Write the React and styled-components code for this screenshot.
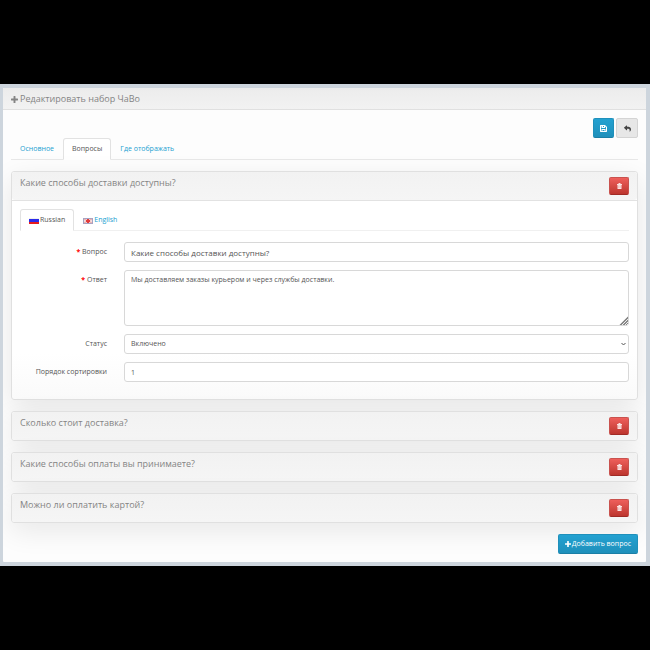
import React, { useState } from 'react';
import styled, { createGlobalStyle } from 'styled-components';
import { FaReply } from 'react-icons/fa';

const GlobalStyles = createGlobalStyle`
  * {
    box-sizing: border-box;
  }
  body {
    margin: 0;
    background: #000;
    color: #555;
    font-family: 'Open Sans', 'Noto Sans', sans-serif;
    font-size: 7px;
    line-height: 10px;
  }
  button,
  input,
  select,
  textarea {
    font: inherit;
    color: inherit;
  }
`;

const PageStyles = styled.main`
  display: flex;
  flex-direction: column;
  justify-content: center;
  min-height: 100vh;
`;

const BackdropStyles = styled.div`
  padding: 4px 4px 4px 3px;
  background: #cdd5dd;
`;

const CardStyles = styled.section`
  background: #fdfdfd;
  border-radius: 1px;
  overflow: hidden;
`;

const CardHeading = styled.header`
  display: flex;
  align-items: center;
  gap: 2px;
  height: 22px;
  padding: 1px 8px 0;
  color: #848484;
  background: linear-gradient(#ececec, #f2f2f2);
  border-bottom: 1px solid #e0e0e0;
  h1 {
    margin: 0;
    font-size: 9px;
    font-weight: 400;
    line-height: 12px;
  }
`;

const CardBody = styled.div`
  padding: 8px;
`;

const Toolbar = styled.div`
  display: flex;
  justify-content: flex-end;
  gap: 2px;
`;

const Button = styled.button`
  display: inline-flex;
  align-items: center;
  justify-content: center;
  gap: 1px;
  height: 20px;
  min-width: 21px;
  padding: 0 6px;
  color: #fff;
  background: linear-gradient(#23a1d1, #1f90bb);
  border: 1px solid #1f90bb;
  border-bottom-color: #1b7fa6;
  border-radius: 2px;
  cursor: pointer;
`;

const DefaultButton = styled(Button)`
  min-width: 22px;
  color: #444;
  background: #e7e7e7;
  border-color: #d4d4d4;
`;

const DangerButton = styled(Button)`
  height: 18px;
  min-width: 20px;
  background: linear-gradient(#ee5f5b, #bd362f);
  border-color: #c9524e;
  border-bottom-color: #a02b26;
`;

const TabList = styled.div`
  display: flex;
  border-bottom: 1px solid ${({ $soft }) => ($soft ? '#f0f0f0' : '#e8e8e8')};
`;

const Tab = styled.button`
  display: flex;
  align-items: center;
  gap: 1px;
  height: 22px;
  margin-bottom: -1px;
  padding: 0 8px;
  color: ${({ $active }) => ($active ? '#555' : '#23a1d1')};
  background: ${({ $active }) => ($active ? '#fff' : 'transparent')};
  border: 1px solid ${({ $active }) => ($active ? '#e2e2e2' : 'transparent')};
  border-bottom-color: ${({ $active }) => ($active ? '#fff' : 'transparent')};
  border-radius: 3px 3px 0 0;
  cursor: pointer;
`;

const PanelList = styled.div`
  display: flex;
  flex-direction: column;
  gap: 11px;
  margin: 11px 0;
`;

const PanelStyles = styled.article`
  background: linear-gradient(#fff 80%, #fafafa);
  border: 1px solid #e0e0e0;
  border-radius: 3px;
  box-shadow: 0 8px 28px rgba(0, 0, 0, 0.09);
`;

const PanelHeading = styled.header`
  display: flex;
  align-items: flex-start;
  justify-content: space-between;
  padding: 5px 8px;
  background: linear-gradient(#f2f2f2, #f5f5f5);
  border-radius: 3px;
  h2 {
    margin: 0;
    color: #848484;
    font-size: 9px;
    font-weight: 400;
    line-height: 12px;
  }
`;

const PanelBody = styled.div`
  padding: 8px 8px 17px;
  border-top: 1px solid #e2e2e2;
`;

const FormStyles = styled.div`
  display: flex;
  flex-direction: column;
  gap: 8px;
  margin-top: 11px;
`;

const FieldStyles = styled.div`
  display: grid;
  grid-template-columns: 104px 1fr;
  label {
    padding: 5px 17px 0 0;
    text-align: right;
  }
  label span {
    color: #f00;
    font-weight: 700;
  }
`;

const TextInput = styled.input`
  width: 100%;
  height: 20px;
  padding: 0 6px;
  font-size: ${({ $large }) => ($large ? '8px' : '7px')};
  background: #fff;
  border: 1px solid #d8d8d8;
  border-radius: 3px;
`;

const TextArea = styled.textarea`
  display: block;
  width: 100%;
  height: 56px;
  padding: 4px 6px;
  background: #fff;
  border: 1px solid #d8d8d8;
  border-radius: 3px;
  resize: vertical;
  &::-webkit-resizer {
    background:
      linear-gradient(135deg, #fff 50%, transparent 50%) right bottom / 9px 9px no-repeat,
      repeating-linear-gradient(135deg, #eee 0 1px, #888 1px 2px) right bottom / 9px 9px no-repeat;
  }
`;

const SelectStyles = styled.div`
  display: grid;
  align-items: center;
  select,
  svg {
    grid-area: 1 / 1;
  }
  select {
    width: 100%;
    height: 20px;
    padding: 0 6px;
    appearance: none;
    background: #fff;
    border: 1px solid #d8d8d8;
    border-radius: 3px;
  }
  svg {
    justify-self: end;
    margin-right: 3px;
    pointer-events: none;
  }
`;

const Footer = styled.footer`
  display: flex;
  justify-content: flex-end;
`;

const PlusIcon = ({ size }) => (
  <svg width={size} height={size} viewBox="0 0 8 8" aria-hidden="true">
    <path
      fill="currentColor"
      d="M3.3 0h1.4q.4 0 .4.4v2.5h2.5q.4 0 .4.4v1.4q0 .4-.4.4H5.100v2.500q0 .4-.4.4H3.300q-.4 0-.4-.4V5.100H.4Q0 5.100 0 4.700V3.300q0-.4.4-.4h2.500V.4q0-.4.4-.4z"
    />
  </svg>
);

const SaveIcon = () => (
  <svg width="7" height="7" viewBox="0 0 14 14" aria-hidden="true">
    <path
      fill="#fff"
      fillRule="evenodd"
      d="M1 0h9l4 4v9l-1 1H1l-1-1V1zM2 2v10h1V8h8v4h1V5L10 3v3H3V2zM6 2v2h2V2zM5 10v2h4v-2z"
    />
  </svg>
);

const TrashIcon = () => (
  <svg width="5" height="6" viewBox="0 0 10 12" aria-hidden="true">
    <path fill="#fbe3e2" d="M3 0h4v2h3v2H9v8H1V4H0V2h3z" />
    <path stroke="#e39a97" d="M3.500 5v5M6.500 5v5" />
  </svg>
);

const RussianFlag = () => (
  <svg width="10" height="7" viewBox="0 0 10 7" aria-hidden="true">
    <path fill="#f0f0f0" d="M0 1h10v1H0z" />
    <path fill="#2b2bea" d="M0 2h10v3H0z" />
    <path fill="#e81c1c" d="M0 5h10v2H0z" />
  </svg>
);

const EnglishFlag = () => (
  <svg width="10" height="7" viewBox="0 0 10 7" aria-hidden="true">
    <path fill="#a3a3c4" d="M0 1h10v6H0z" />
    <path fill="#f3dcdc" d="M1 2h8v4H1z" />
    <path stroke="#eaa5a5" strokeWidth="1" d="M1 2l8 4M9 2L1 6" />
    <path fill="#e23c3c" d="M4 2h2v4H4zM3 3h4v2H3z" />
  </svg>
);

const tabs = ['Основное', 'Вопросы', 'Где отображать'];

const languages = [
  { name: 'Russian', Flag: RussianFlag },
  { name: 'English', Flag: EnglishFlag },
];

const questions = [
  {
    title: 'Какие способы доставки доступны?',
    answer: 'Мы доставляем заказы курьером и через службы доставки.',
    open: true,
  },
  { title: 'Сколько стоит доставка?' },
  { title: 'Какие способы оплаты вы принимаете?' },
  { title: 'Можно ли оплатить картой?' },
];

const QuestionForm = ({ question }) => {
  const [language, setLanguage] = useState('Russian');

  return (
    <PanelBody>
      <TabList $soft role="tablist">
        {languages.map(({ name, Flag }) => (
          <Tab
            key={name}
            type="button"
            role="tab"
            aria-selected={name === language}
            $active={name === language}
            onClick={() => setLanguage(name)}
          >
            <Flag />
            {name}
          </Tab>
        ))}
      </TabList>
      <FormStyles>
        <FieldStyles>
          <label htmlFor="question">
            <span>*</span> Вопрос
          </label>
          <TextInput $large id="question" defaultValue={question.title} />
        </FieldStyles>
        <FieldStyles>
          <label htmlFor="answer">
            <span>*</span> Ответ
          </label>
          <TextArea id="answer" defaultValue={question.answer} />
        </FieldStyles>
        <FieldStyles>
          <label htmlFor="status">Статус</label>
          <SelectStyles>
            <select id="status" defaultValue="1">
              <option value="1">Включено</option>
              <option value="0">Отключено</option>
            </select>
            <svg width="5" height="4" viewBox="0 0 5 4" aria-hidden="true">
              <path d="M.5 1l2 2 2-2" fill="none" stroke="#555" />
            </svg>
          </SelectStyles>
        </FieldStyles>
        <FieldStyles>
          <label htmlFor="sort">Порядок сортировки</label>
          <TextInput id="sort" defaultValue="1" />
        </FieldStyles>
      </FormStyles>
    </PanelBody>
  );
};

const App = () => {
  const [tab, setTab] = useState('Вопросы');

  return (
    <PageStyles>
      <GlobalStyles />
      <BackdropStyles>
        <CardStyles>
          <CardHeading>
            <PlusIcon size={7} />
            <h1>Редактировать набор ЧаВо</h1>
          </CardHeading>
          <CardBody>
            <Toolbar>
              <Button type="button" aria-label="Сохранить">
                <SaveIcon />
              </Button>
              <DefaultButton type="button" aria-label="Назад">
                <FaReply size={7} />
              </DefaultButton>
            </Toolbar>
            <TabList role="tablist">
              {tabs.map((name) => (
                <Tab
                  key={name}
                  type="button"
                  role="tab"
                  aria-selected={name === tab}
                  $active={name === tab}
                  onClick={() => setTab(name)}
                >
                  {name}
                </Tab>
              ))}
            </TabList>
            <PanelList>
              {questions.map((question) => (
                <PanelStyles key={question.title}>
                  <PanelHeading>
                    <h2>{question.title}</h2>
                    <DangerButton type="button" aria-label="Удалить">
                      <TrashIcon />
                    </DangerButton>
                  </PanelHeading>
                  {question.open && <QuestionForm question={question} />}
                </PanelStyles>
              ))}
            </PanelList>
            <Footer>
              <Button type="button">
                <PlusIcon size={6} />
                Добавить вопрос
              </Button>
            </Footer>
          </CardBody>
        </CardStyles>
      </BackdropStyles>
    </PageStyles>
  );
};

export default App;
